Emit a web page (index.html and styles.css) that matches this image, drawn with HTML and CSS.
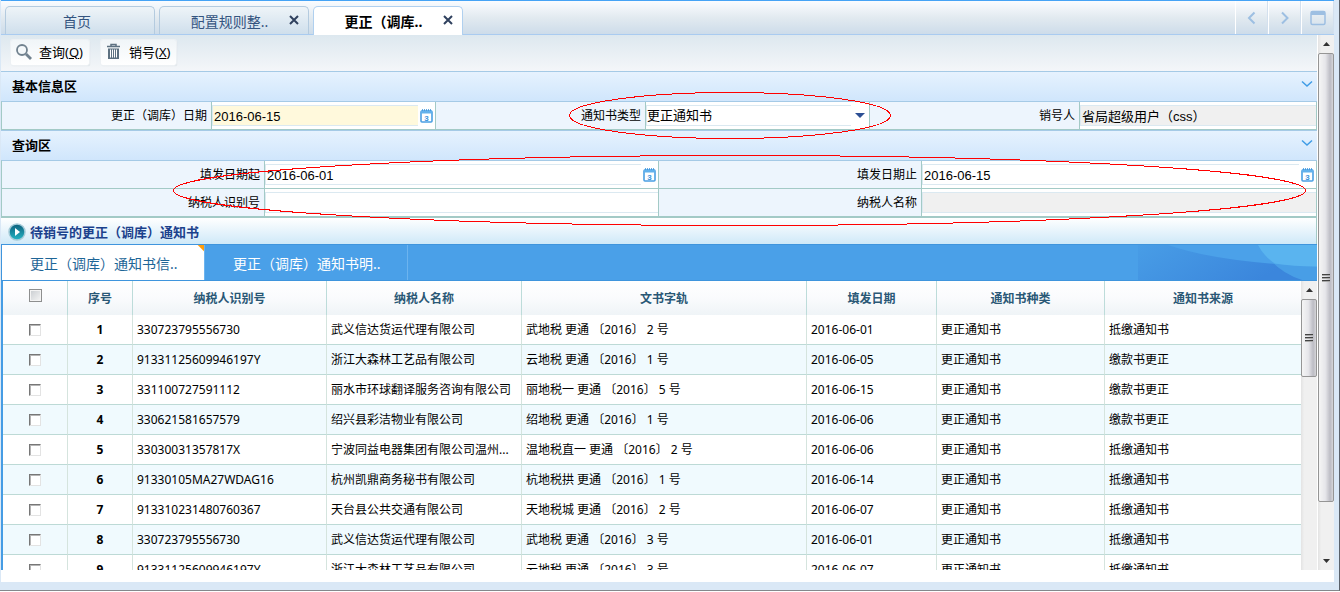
FILE: index.html
```html
<!DOCTYPE html>
<html lang="zh-CN">
<head>
<meta charset="utf-8">
<title>更正（调库）通知书销号</title>
<link rel="stylesheet" href="styles.css">
</head>
<body>
<svg class="defs" width="0" height="0" aria-hidden="true">
  <symbol id="calendar" viewBox="0 0 13 14">
    <rect x="1" y="2" width="11" height="11" rx="1" fill="#fff" stroke="#4a9fe3" stroke-width="1.6"/>
    <rect x="1" y="1.500" width="11" height="3" fill="#62b1ec"/>
    <path d="M2.500 0v2M4.500 0v2M6.500 0v2M8.500 0v2M10.500 0v2" stroke="#3b93dc" stroke-width=".8"/>
    <text x="6.500" y="11.500" text-anchor="middle" font-size="8" font-weight="bold" fill="#3b93dc">3</text>
  </symbol>
  <symbol id="chevron" viewBox="0 0 12 8"><path d="M1 1.500l5 4.500 5-4.500" fill="none" stroke="#3f9ce6" stroke-width="1.500"/></symbol>
  <symbol id="up" viewBox="0 0 7 4"><path d="M0 4l3.500-4L7 4z" fill="#333"/></symbol>
  <symbol id="down" viewBox="0 0 7 4"><path d="M0 0l3.500 4L7 0z" fill="#333"/></symbol>
  <symbol id="close" viewBox="0 0 10 10"><path d="M1 1l8 8M9 1l-8 8" stroke="#2f405e" stroke-width="2"/></symbol>
</svg>
<div class="window">
  <header class="tabbar">
    <nav class="tabs">
      <div class="tab"><a href="#">首页</a></div>
      <div class="tab"><a href="#">配置规则整..</a><button class="tab-close" aria-label="关闭"><svg><use href="#close"/></svg></button></div>
      <div class="tab tab-active"><a href="#">更正（调库..</a><button class="tab-close" aria-label="关闭"><svg><use href="#close"/></svg></button></div>
    </nav>
    <div class="nav-buttons">
      <button aria-label="向左"><svg width="16" height="16" viewBox="0 0 16 16"><path d="M10.500 2.500L5 8l5.500 5.500" fill="none" stroke="#9dbfe2" stroke-width="2"/></svg></button>
      <button aria-label="向右"><svg width="16" height="16" viewBox="0 0 16 16"><path d="M5 2.500L10.500 8 5 13.500" fill="none" stroke="#9dbfe2" stroke-width="2"/></svg></button>
      <button aria-label="最大化"><svg width="16" height="16" viewBox="0 0 16 16"><rect x="1" y="1.500" width="14" height="13" rx="1.500" fill="none" stroke="#9dbfe2" stroke-width="1.500"/><path d="M1 1.500h14v3.500H1z" fill="#9dbfe2"/></svg></button>
    </div>
  </header>
  <div class="body">
    <main class="page">
      <div class="toolbar">
        <button class="tool"><svg width="18" height="18" viewBox="0 0 18 18"><circle cx="7" cy="7" r="5" fill="#f4f8fa" stroke="#71828f" stroke-width="1.800"/><path d="M11 11l5 5" stroke="#71828f" stroke-width="2.800"/></svg><span>查询(<u>Q</u>)</span></button>
        <button class="tool"><svg width="18" height="18" viewBox="0 0 18 18"><path d="M2 3.500h13M6 3V1.500h5V3" fill="none" stroke="#5d7181" stroke-width="1.500"/><path d="M3 5.500h11V16H3z" fill="#5d7181"/><path d="M5.500 6.500v8M7.500 6.500v8M9.500 6.500v8M11.500 6.500v8" stroke="#fff"/></svg><span>销号(<u>X</u>)</span></button>
      </div>

      <h2 class="section"><span>基本信息区</span><button aria-label="收起"><svg><use href="#chevron"/></svg></button></h2>
      <form class="form form-three">
        <label for="d0">更正（调库）日期</label>
        <div class="field"><input id="d0" class="required" type="text" value="2016-06-15"><button type="button" class="pick" aria-label="选择日期"><svg><use href="#calendar"/></svg></button></div>
        <label for="kind">通知书类型</label>
        <div class="field"><select id="kind"><option>更正通知书</option></select><svg class="arrow" viewBox="0 0 10 5"><path d="M0 0h10L5 5z" fill="#2c4f94"/></svg></div>
        <label for="user">销号人</label>
        <div class="field"><input id="user" class="locked" type="text" value="省局超级用户（css）" readonly></div>
      </form>

      <h2 class="section"><span>查询区</span><button aria-label="收起"><svg><use href="#chevron"/></svg></button></h2>
      <form class="form form-two">
        <label for="d1">填发日期起</label>
        <div class="field"><input id="d1" type="text" value="2016-06-01"><button type="button" class="pick" aria-label="选择日期"><svg><use href="#calendar"/></svg></button></div>
        <label for="d2">填发日期止</label>
        <div class="field"><input id="d2" type="text" value="2016-06-15"><button type="button" class="pick" aria-label="选择日期"><svg><use href="#calendar"/></svg></button></div>
        <label for="tid">纳税人识别号</label>
        <div class="field"><input id="tid" type="text"></div>
        <label for="tname">纳税人名称</label>
        <div class="field"><input id="tname" class="locked" type="text" readonly></div>
      </form>

      <h2 class="list-title">
        <svg width="18" height="18" viewBox="0 0 18 18"><defs><linearGradient id="orb" x1="0" y1="0" x2="0" y2="1"><stop offset="0" stop-color="#0b5f7d"/><stop offset="1" stop-color="#25b5c4"/></linearGradient></defs><circle cx="9" cy="9" r="8" fill="url(#orb)" stroke="#a5cbd8" stroke-width="1.500"/><path d="M7 5l5 4-5 4z" fill="#fff"/></svg>
        <span>待销号的更正（调库）通知书</span>
      </h2>
      <nav class="subtabs">
        <a class="subtab subtab-active" href="#">更正（调库）通知书信..</a>
        <a class="subtab" href="#">更正（调库）通知书明..</a>
        <svg class="waves" viewBox="0 0 179 36" preserveAspectRatio="none" aria-hidden="true"><defs><linearGradient id="sea" x1="0" y1="0" x2="1" y2=".3"><stop offset="0" stop-color="#489de6"/><stop offset=".9" stop-color="#3b86dc"/></linearGradient></defs><path d="M0 0h179v36H0z" fill="url(#sea)"/><path d="M30 0Q80 18 179 22V0z" fill="#4ba1e9"/><path d="M120 0Q138 28 164 36H179V0z" fill="#4ea8ea" opacity=".7"/><path d="M120 0Q126 12 137 19Q155 22 179 22V0z" fill="#5ab4ef"/></svg>
      </nav>

      <div class="grid">
        <div class="grid-view">
          <table>
            <colgroup><col class="c-mark"><col class="c-mark"><col class="c-id"><col class="c-name"><col class="c-doc"><col class="c-date"><col class="c-kind"><col></colgroup>
            <thead><tr><th><input type="checkbox" aria-label="全选"></th><th>序号</th><th>纳税人识别号</th><th>纳税人名称</th><th>文书字轨</th><th>填发日期</th><th>通知书种类</th><th>通知书来源</th></tr></thead>
            <tbody>
              <tr><td><input type="checkbox" aria-label="选择 1"></td><td>1</td><td>330723795556730</td><td>武义信达货运代理有限公司</td><td>武地税 更通 〔2016〕 2 号</td><td>2016-06-01</td><td>更正通知书</td><td>抵缴通知书</td></tr>
              <tr><td><input type="checkbox" aria-label="选择 2"></td><td>2</td><td>91331125609946197Y</td><td>浙江大森林工艺品有限公司</td><td>云地税 更通 〔2016〕 1 号</td><td>2016-06-05</td><td>更正通知书</td><td>缴款书更正</td></tr>
              <tr><td><input type="checkbox" aria-label="选择 3"></td><td>3</td><td>331100727591112</td><td>丽水市环球翻译服务咨询有限公司</td><td>丽地税一 更通 〔2016〕 5 号</td><td>2016-06-15</td><td>更正通知书</td><td>缴款书更正</td></tr>
              <tr><td><input type="checkbox" aria-label="选择 4"></td><td>4</td><td>330621581657579</td><td>绍兴县彩洁物业有限公司</td><td>绍地税 更通 〔2016〕 1 号</td><td>2016-06-06</td><td>更正通知书</td><td>缴款书更正</td></tr>
              <tr><td><input type="checkbox" aria-label="选择 5"></td><td>5</td><td>33030031357817X</td><td>宁波同益电器集团有限公司温州...</td><td>温地税直一 更通 〔2016〕 2 号</td><td>2016-06-06</td><td>更正通知书</td><td>抵缴通知书</td></tr>
              <tr><td><input type="checkbox" aria-label="选择 6"></td><td>6</td><td>91330105MA27WDAG16</td><td>杭州凯鼎商务秘书有限公司</td><td>杭地税拱 更通 〔2016〕 1 号</td><td>2016-06-14</td><td>更正通知书</td><td>抵缴通知书</td></tr>
              <tr><td><input type="checkbox" aria-label="选择 7"></td><td>7</td><td>913310231480760367</td><td>天台县公共交通有限公司</td><td>天地税城 更通 〔2016〕 2 号</td><td>2016-06-07</td><td>更正通知书</td><td>抵缴通知书</td></tr>
              <tr><td><input type="checkbox" aria-label="选择 8"></td><td>8</td><td>330723795556730</td><td>武义信达货运代理有限公司</td><td>武地税 更通 〔2016〕 3 号</td><td>2016-06-01</td><td>更正通知书</td><td>抵缴通知书</td></tr>
              <tr><td><input type="checkbox" aria-label="选择 9"></td><td>9</td><td>91331125609946197Y</td><td>浙江大森林工艺品有限公司</td><td>云地税 更通 〔2016〕 3 号</td><td>2016-06-07</td><td>更正通知书</td><td>抵缴通知书</td></tr>
            </tbody>
          </table>
        </div>
        <div class="scroll">
          <div class="scroll-end"><svg><use href="#up"/></svg></div>
          <div class="thumb thumb-grid"><i></i></div>
        </div>
      </div>
    </main>
    <div class="scroll scroll-page">
      <div class="scroll-end"><svg><use href="#up"/></svg></div>
      <div class="thumb thumb-page"><i></i></div>
      <div class="scroll-end scroll-bottom"><svg><use href="#down"/></svg></div>
    </div>
    <svg class="marks" viewBox="0 0 1333 535" preserveAspectRatio="none" aria-hidden="true">
      <ellipse cx="729" cy="80.500" rx="160.500" ry="23"/>
      <ellipse cx="738.500" cy="155.500" rx="566" ry="35"/>
    </svg>
  </div>
</div>
</body>
</html>
```

FILE: styles.css
```css
* { box-sizing: border-box; }
body {
  margin: 0;
  background: #fff;
  color: #000;
  font: 12px/18px "Noto Sans", "Noto Sans CJK SC", sans-serif;
}
.defs { position: absolute; }
svg { display: block; flex: none; }
button { padding: 0; border: 0; background: none; font: inherit; color: inherit; }
a { color: inherit; text-decoration: none; }
h2 { margin: 0; }

.window {
  display: flex;
  flex-direction: column;
  height: calc(100vh - 1px);
  padding: 0 5px 8px 1px;
  background: #dae8f6;
  border-right: 1px solid #5b626b;
  border-bottom: 1px solid #85888c;
}

/* top tabs */
.tabbar {
  flex: none;
  display: flex;
  justify-content: space-between;
  height: 35px;
  border-top: 1px solid #45a3f5;
  border-bottom: 1px solid #a9cbf0;
  background: linear-gradient(#fafcff, #e2eaf0 50%, #cddcea);
}
.tabs { display: flex; gap: 4px; padding: 5px 0 0 4px; }
.tab {
  display: flex;
  align-items: center;
  width: 150px;
  height: 28px;
  padding: 2px 16px 0 10px;
  border: 1px solid #b4cbdf;
  border-bottom: 0;
  border-radius: 5px 5px 0 0;
  background: linear-gradient(#eef4f8, #cfdfec);
  color: #34547f;
  font-size: 14px;
}
.tab a { flex: 1; text-align: center; white-space: nowrap; }
.tab:not(:first-child) { padding-right: 9px; }
.tab-close { padding-bottom: 4px; }
.tab-close svg { width: 10px; height: 10px; }
.tab-active { height: 29px; border-color: #b0d0ef; background: #fff; color: #000; font-weight: bold; }
.nav-buttons { display: flex; }
.nav-buttons button {
  display: flex;
  align-items: center;
  justify-content: center;
  width: 33px;
  border-left: 1px solid #fff;
  border-right: 1px solid #d3e0ee;
}

/* page area */
.body { position: relative; flex: 1; display: flex; min-height: 0; padding-bottom: 12px; background: #fff; }
.page { flex: 1; display: flex; flex-direction: column; min-width: 0; }
.toolbar {
  flex: none;
  display: flex;
  gap: 12px;
  height: 36px;
  padding: 5px 10px;
  background: linear-gradient(#dde8ef, #f4f6f9);
}
.tool {
  display: flex;
  align-items: center;
  gap: 6px;
  height: 25px;
  padding: 0 6px 2px 4px;
  border-radius: 2px;
  background: linear-gradient(#f0f5f8, #fff);
  box-shadow: 0 0 0 1px #edf1f4, 1px 1px 1px #cfd6dc;
  font-size: 13px;
}
.section {
  flex: none;
  display: flex;
  justify-content: space-between;
  align-items: center;
  height: 30px;
  padding: 0 4px 2px 11px;
  border-top: 1px solid #a5cae6;
  background: linear-gradient(#e6f2fe, #d0e6fc);
  font-size: 13px;
}
.section button { padding-bottom: 4px; }
.section svg { width: 12px; height: 8px; }

.form {
  flex: none;
  display: grid;
  border: 1px solid #a3cac6;
  border-top-color: #a5cae6;
  border-right: 0;
  background: #edf5fd;
}
.form-three { grid-template-columns: 209fr 225fr 209fr 225fr 209fr 238fr; }
.form-two { grid-template-columns: 262fr 395fr 262fr 396fr; border-bottom-width: 2px; }
.form-two > :nth-child(-n+4) { border-bottom: 1px solid #a3cac6; }
.form label { padding: 5px 4px 4px 0; text-align: right; }
.field {
  display: flex;
  align-items: center;
  min-width: 0;
  padding: 3px 0;
  border-left: 1px solid #a3cac6;
  border-right: 1px solid #a3cac6;
  background: #fff;
}
.field input, .field select {
  flex: 1;
  min-width: 0;
  height: 21px;
  padding: 0;
  border: 1px solid #dbe9f1;
  border-right: 0;
  border-radius: 0;
  background: #fff;
  color: #000;
  font: 13px/18px "Liberation Sans", "Noto Sans CJK SC", sans-serif;
  appearance: none;
}
.field input { padding: 2px 0 0 1px; }
.field .required { background: #fff9dc; }
.field .locked { padding: 0 0 0 1px; background: #f0f0f0; }
.pick { padding: 0 2px; }
.pick svg { width: 13px; height: 14px; font-family: "Liberation Sans", sans-serif; }
.arrow { width: 10px; height: 5px; margin: 0 4px; }

.list-title {
  flex: none;
  display: flex;
  align-items: center;
  gap: 4px;
  height: 26px;
  padding: 1px 0 0 7px;
  background: linear-gradient(#fff, #cfe9f8);
  border-right: 1px solid #a3cac6;
  color: #1b418c;
  font-size: 13px;
}
.subtabs {
  flex: none;
  display: flex;
  height: 37px;
  border: solid #3f95dd;
  border-width: 1px 0 1px 1px;
  background: #4aa0e8;
}
.subtab {
  width: 203px;
  padding: 10px 0 0 28px;
  border-right: 1px solid #6cb4ef;
  color: #fff;
  font-size: 14px;
}
.subtab-active {
  background: linear-gradient(225deg, #ff9c0a 4px, transparent 5px), #fff;
  color: #1d6597;
}
.waves { width: 179px; height: 35px; margin-left: auto; }

/* data table */
.grid { flex: 1; display: flex; min-height: 0; border-left: 2px solid #459ce4; }
.grid-view { flex: 1; overflow: hidden; }
table { width: 100%; border-collapse: separate; border-spacing: 0; table-layout: fixed; }
.c-mark { width: 65px; }
.c-id { width: 194px; }
.c-name { width: 195px; }
.c-doc { width: 285px; }
.c-date { width: 130px; }
.c-kind { width: 168px; }
th {
  height: 34px;
  padding: 2px 0 0;
  border-right: 1px solid #bddcda;
  background: linear-gradient(#fff, #fafbfd 50%, #eff4f7);
  color: #2a5876;
}
td {
  height: 30px;
  padding: 0 0 0 4px;
  border-right: 1px solid #d5e4de;
  border-bottom: 1px solid #bddad6;
  white-space: nowrap;
  overflow: hidden;
}
th:last-child, td:last-child { border-right: 0; }
tbody tr:nth-child(even) { background: #f0fafe; }
td:nth-child(-n+2) { padding: 0; text-align: center; }
td:nth-child(2) { font-weight: bold; }
td input, th input {
  display: block;
  width: 12px;
  height: 12px;
  margin: 0 auto;
  border: 1px solid #e3e3e3;
  border-top-color: #777;
  border-left-color: #777;
  background: #fff;
  box-shadow: inset 1px 1px #b5b5b5;
  appearance: none;
}
th input {
  width: 13px;
  height: 13px;
  margin-bottom: 8px;
  border-color: #8e8f8f;
  background: linear-gradient(135deg, #c8ccd0, #f6f6f6);
  box-shadow: inset 0 0 0 1px #f4f4f4;
}
td input { margin-top: 1px; }

/* scroll bars */
.scroll {
  flex: none;
  display: flex;
  flex-direction: column;
  width: 16px;
  background: linear-gradient(90deg, #e3e3e3, #f0f0f0 20%, #f0f0f0);
}
.scroll-page { margin-left: 1px; }
.scroll-end {
  flex: none;
  display: flex;
  align-items: center;
  justify-content: center;
  height: 18px;
}
.scroll-end svg { width: 7px; height: 4px; }
.thumb {
  display: flex;
  align-items: center;
  justify-content: center;
  border: 1px solid #959595;
  border-radius: 2px;
  background: linear-gradient(90deg, #f5f5f5, #e6e6ea 45%, #bcbcc4 80%, #d5d5d8);
}
.thumb i {
  width: 8px;
  height: 8px;
  background: repeating-linear-gradient(#444 0 1px, #aaa 1px 2px, transparent 2px 3px);
}
.thumb-page { flex: 0 0 84%; }
.thumb-grid { flex: 0 0 27%; }
.scroll-bottom { margin-top: auto; }

/* red ellipses around the filter fields */
.marks {
  position: absolute;
  top: 0;
  left: 0;
  width: 100%;
  height: 535px;
  fill: none;
  stroke: #f00;
  shape-rendering: crispEdges;
  pointer-events: none;
}
```
